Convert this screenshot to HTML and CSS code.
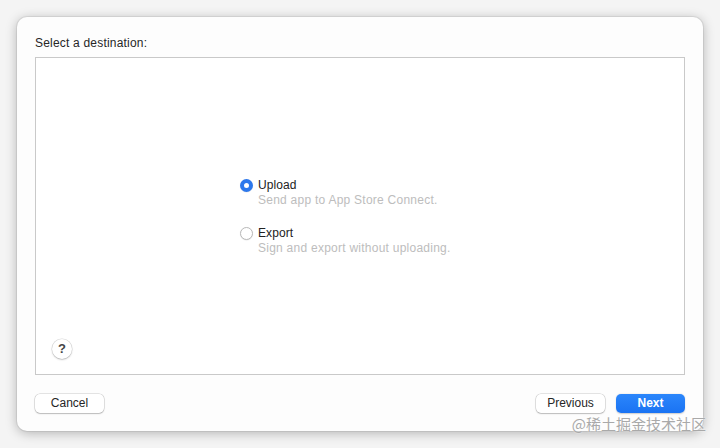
FILE: index.html
```html
<!DOCTYPE html>
<html>
<head>
<meta charset="utf-8">
<link rel="stylesheet" href="styles.css">
</head>
<body>
<div class="window">
  <div class="title">Select a destination:</div>
  <div class="panel">
    <div class="options">
      <div class="option">
        <span class="radio radio-on"></span>
        <div class="option-text">
          <div class="option-label">Upload</div>
          <div class="option-desc">Send app to App Store Connect.</div>
        </div>
      </div>
      <div class="option">
        <span class="radio"></span>
        <div class="option-text">
          <div class="option-label">Export</div>
          <div class="option-desc">Sign and export without uploading.</div>
        </div>
      </div>
    </div>
    <div class="help">?</div>
  </div>
  <div class="actions">
    <button class="btn">Cancel</button>
    <div class="actions-right">
      <button class="btn">Previous</button>
      <button class="btn btn-primary">Next</button>
    </div>
  </div>
</div>
<div class="watermark">@稀土掘金技术社区</div>
</body>
</html>
```
FILE: styles.css
```css
html, body {
  margin: 0;
  padding: 0;
}
body {
  width: 720px;
  height: 448px;
  background: #f4f4f4;
  font-family: "Liberation Sans", Arial, sans-serif;
  color: #222;
  position: relative;
  overflow: hidden;
  padding-top: 17px;
  box-sizing: border-box;
}
.window {
  margin-left: 17px;
  width: 686px;
  height: 414px;
  box-sizing: border-box;
  background: #fdfdfd;
  border-radius: 10px;
  box-shadow: 0 0 0 1px rgba(0,0,0,0.06), 0 2px 12px rgba(0,0,0,0.28);
  padding: 19px 18px 0 18px;
  display: flex;
  flex-direction: column;
}
.title {
  font-size: 12px;
  line-height: 14px;
  letter-spacing: 0.2px;
  color: #262626;
  height: 21px;
}
.panel {
  height: 318px;
  box-sizing: border-box;
  border: 1px solid #c9c9c9;
  background: #fff;
  display: flex;
  flex-direction: column;
  padding: 37px 0 15px 16px;
}
.options {
  flex: 1;
  display: flex;
  flex-direction: column;
  justify-content: center;
  padding-left: 188px;
  gap: 18px;
}
.option {
  display: flex;
  align-items: flex-start;
  gap: 5px;
}
.radio {
  width: 13px;
  height: 13px;
  box-sizing: border-box;
  border-radius: 50%;
  border: 1px solid #b9b9b9;
  background: #fff;
  margin-top: 1px;
  box-shadow: 0 0.5px 1px rgba(0,0,0,0.1);
  flex-shrink: 0;
}
.radio-on {
  border: 4px solid #2d78ec;
  background: #fff;
}
.option-label {
  font-size: 12px;
  line-height: 15px;
  letter-spacing: 0.1px;
  color: #222;
}
.option-desc {
  font-size: 12px;
  line-height: 15px;
  letter-spacing: 0.25px;
  color: #bdbdbd;
}
.help {
  width: 20px;
  height: 20px;
  border-radius: 50%;
  background: #fff;
  box-shadow: 0 0 0 0.5px rgba(0,0,0,0.15), 0 1px 2px rgba(0,0,0,0.18);
  font-size: 13px;
  font-weight: bold;
  line-height: 20px;
  text-align: center;
  color: #444;
}
.actions {
  display: flex;
  justify-content: space-between;
  margin-top: 19px;
}
.actions-right {
  display: flex;
  gap: 11px;
}
.btn {
  font-family: "Liberation Sans", Arial, sans-serif;
  width: 69px;
  height: 19px;
  padding: 0;
  border: none;
  border-radius: 5px;
  background: #fff;
  box-shadow: 0 0 0 0.5px rgba(0,0,0,0.2), 0 1px 1.5px rgba(0,0,0,0.18);
  font-size: 12px;
  color: #262626;
  line-height: 19px;
}
.btn-primary {
  background: linear-gradient(#2b86fb, #1a73f3);
  color: #fff;
  font-weight: bold;
  box-shadow: 0 0.5px 1.5px rgba(0,0,0,0.2);
}
.watermark {
  position: absolute;
  right: 14px;
  top: 414px;
  font-family: "Noto Sans CJK SC", sans-serif;
  font-size: 15px;
  line-height: 20px;
  color: #a9a9a9;
  text-shadow: 0 0 2px #fff;
}
```
